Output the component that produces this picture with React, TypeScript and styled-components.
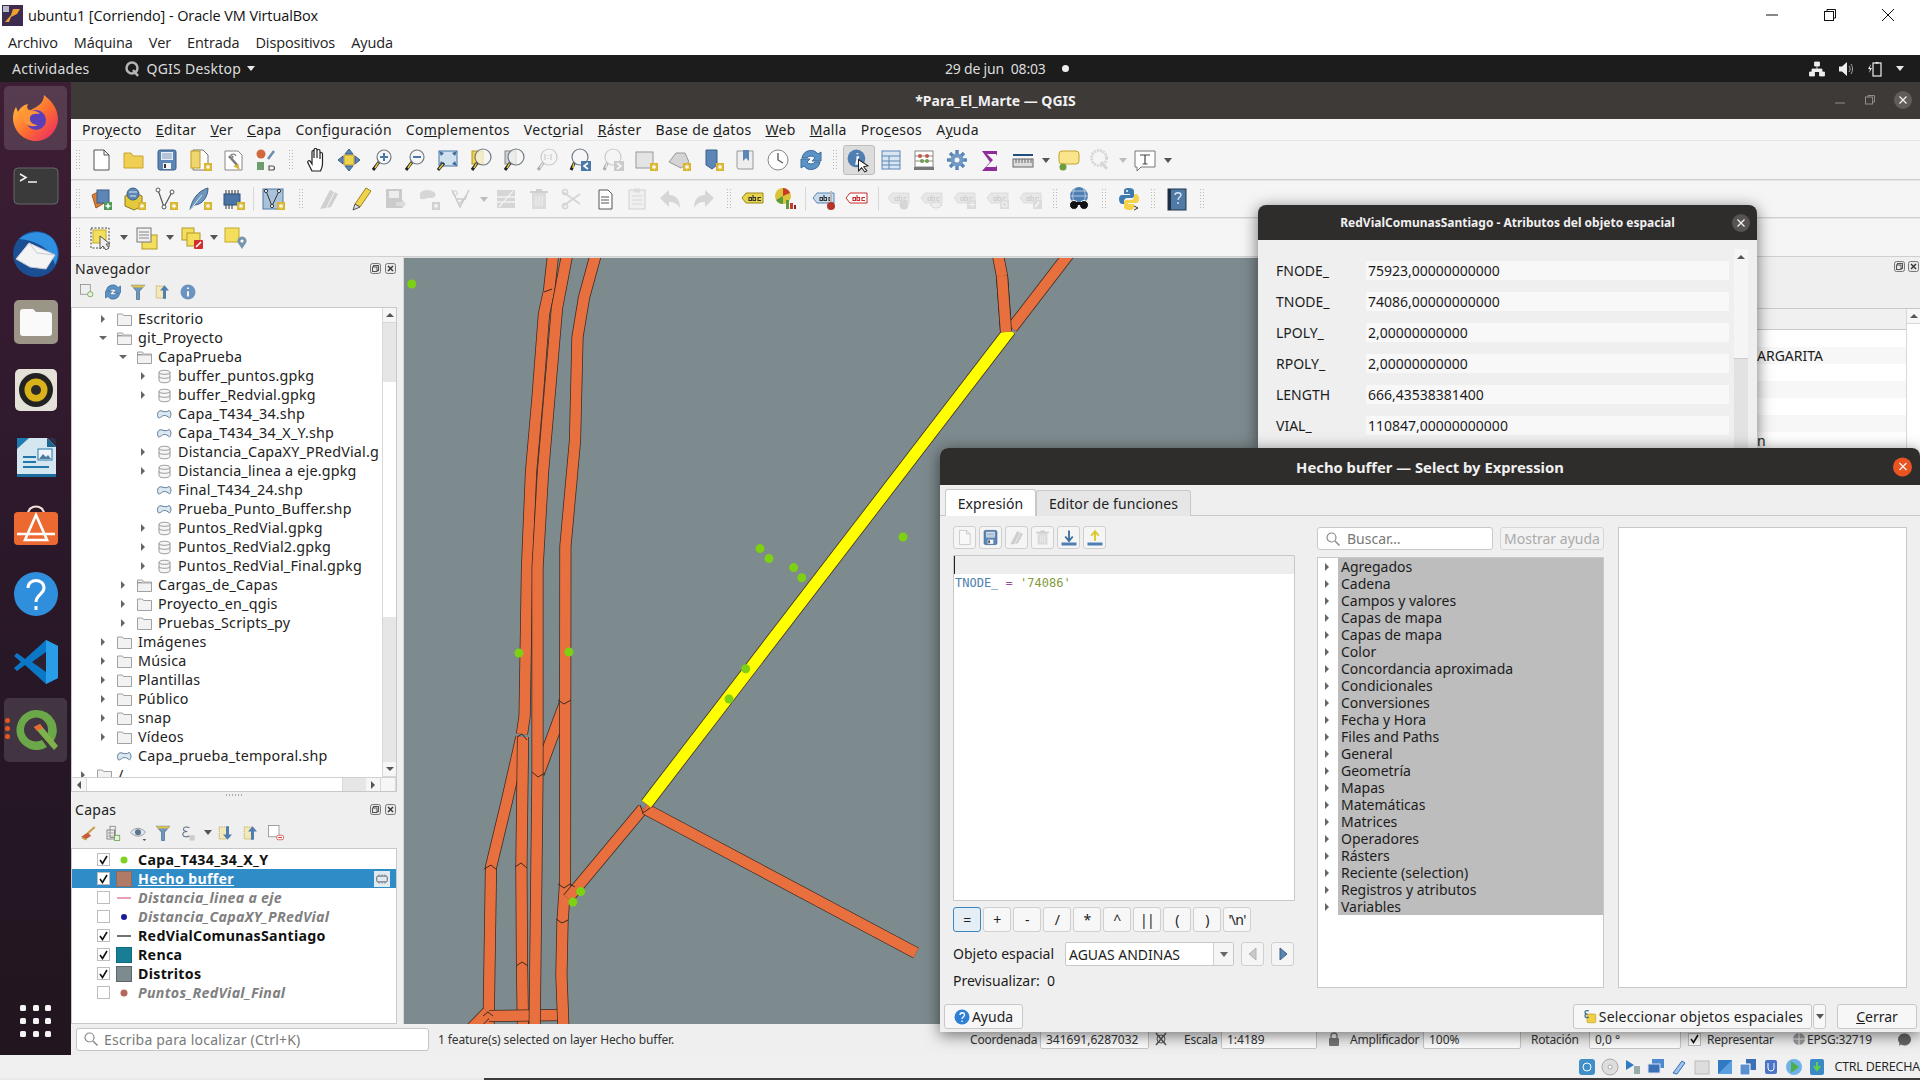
import React from "react";
import styled, { createGlobalStyle } from "styled-components";

const Global = createGlobalStyle`
  html, body { margin: 0; padding: 0; width: 1920px; height: 1080px; overflow: hidden; background: #f0f0f0; }
  #root { width: 1920px; height: 1080px; }
  * { box-sizing: border-box; }
`;

const GUEST = `"Noto Sans", "Open Sans", sans-serif`;

const Screen = styled.div`position: relative; width: 1920px; height: 1080px; display: flex; flex-direction: column; overflow: hidden; font-family: ${GUEST}; color: #1c1c1c;`;
const HostTitle = styled.div`height: 30px; background: #fff; display: flex; align-items: center; padding-left: 2px; font-size: 14.5px; gap: 5px; color: #111; font-family: "Open Sans", sans-serif; letter-spacing: -0.1px;`;
const HostControls = styled.div`margin-left: auto; display: flex; align-items: center; justify-content: flex-end; gap: 46px; padding-right: 26px;`;
const HostMenu = styled.div`height: 25px; background: #fff; display: flex; align-items: center; gap: 16px; padding-left: 8px; font-size: 14.5px; color: #222; font-family: "Open Sans", sans-serif; letter-spacing: -0.1px; padding-bottom: 1px;`;
const Guest = styled.div`height: 1000px; display: flex; flex-direction: column;`;
const TopBar = styled.div`height: 27px; background: #1c1c1c; color: #dcdcdc; font-size: 14px; letter-spacing: .25px; display: flex; align-items: center; position: relative; padding-left: 12px;`;
const TopApp = styled.div`display: flex; align-items: center; gap: 6px; margin-left: 35px;`;
const Caret = styled.span<{ $c?: string }>`display: inline-block; width: 0; height: 0; border-left: 4px solid transparent; border-right: 4px solid transparent; border-top: 5px solid ${(p) => p.$c || "#e8e8e8"};`;
const Clock = styled.div`position: absolute; left: 945px; top: 0; height: 27px; display: flex; align-items: center; gap: 16px; letter-spacing: -0.2px;`;
const Dot = styled.span`width: 7px; height: 7px; border-radius: 50%; background: #eee;`;
const Tray = styled.div`margin-left: auto; display: flex; align-items: center; gap: 13px; padding-right: 16px;`;
const GuestRow = styled.div`flex: 1; display: flex; min-height: 0;`;
const Sidebar = styled.div`width: 71px; padding: 4px 4px 0; display: flex; flex-direction: column; gap: 4px; background: linear-gradient(180deg, #3e1e35 0%, #2a1829 50%, #21151f 100%);`;
const SideItem = styled.div<{ $on?: boolean }>`position: relative; height: 64px; flex: none; border-radius: 5px; display: flex; align-items: center; justify-content: center; background: ${(p) => (p.$on ? "rgba(255,255,255,.13)" : "transparent")};`;
const Pips = styled.div`position: absolute; left: 1px; top: 20px; display: flex; flex-direction: column; gap: 3px;`;
const Pip = styled.span`width: 5px; height: 5px; border-radius: 50%; background: #e95420;`;
const AppsGrid = styled.div`margin-top: auto; margin-bottom: 18px; align-self: center; display: grid; grid-template-columns: repeat(3, 6px); gap: 7px 6.5px;`;
const AppsDot = styled.span`width: 6px; height: 6px; border-radius: 1.5px; background: #f4f4f4;`;

const Qgis = styled.div`flex: 1; min-width: 0; display: flex; flex-direction: column;`;
const WinTitle = styled.div`position: relative; height: 37px; flex: none; background: #3d3a38; color: #f0f0f0; font-weight: 700; font-size: 14px; display: flex; align-items: center; justify-content: center;`;
const WinBtns = styled.div`position: absolute; right: 8px; top: 9px; display: flex; align-items: center; gap: 19px;`;
const CloseDisc = styled.span<{ $c?: string; $s?: number }>`width: ${(p) => p.$s || 18}px; height: ${(p) => p.$s || 18}px; border-radius: 50%; background: ${(p) => p.$c || "#5f5c5a"}; display: flex; align-items: center; justify-content: center; flex: none;`;
const MenuBar = styled.div`height: 21px; flex: none; background: #f6f6f6; display: flex; align-items: center; gap: 14px; padding-left: 11px; font-size: 14px; letter-spacing: .3px; color: #1e1e1e; white-space: nowrap;`;
const ToolRow = styled.div<{ $h: number }>`height: ${(p) => p.$h}px; flex: none; background: #f5f5f5; border-top: 1px solid #e6e6e6; border-bottom: 1px solid #cfcfcf; display: flex; align-items: center;`;
const ToolBtn = styled.div<{ $w?: number; $off?: boolean; $on?: boolean }>`width: ${(p) => p.$w || 33}px; height: 30px; flex: none; display: flex; align-items: center; justify-content: center; opacity: ${(p) => (p.$off ? 0.33 : 1)}; filter: ${(p) => (p.$off ? "grayscale(1)" : "none")}; border-radius: 3px; ${(p) => (p.$on ? "background:#dcdcdc;border:1px solid #bdbdbd;" : "")}`;
const Grip = styled.div<{ $w: number }>`width: ${(p) => p.$w}px; flex: none; height: 22px; display: flex; justify-content: center; &::before { content: ""; width: 6px; height: 100%; background-image: radial-gradient(#b8b8b8 0.8px, transparent 1px); background-size: 3px 3px; }`;
const Sep = styled.div<{ $w: number }>`width: ${(p) => p.$w}px; flex: none; height: 24px; display: flex; justify-content: center; &::before { content: ""; width: 1px; height: 100%; background: #d8d8d8; }`;
const DropSlot = styled.div<{ $w: number; $off?: boolean }>`width: ${(p) => p.$w}px; flex: none; display: flex; justify-content: center; opacity: ${(p) => (p.$off ? 0.35 : 1)};`;

const Content = styled.div`flex: 1; min-height: 0; display: flex;`;
const LeftDock = styled.div`width: 332px; flex: none; background: #efefef; display: flex; flex-direction: column;`;
const DockHead = styled.div`height: 22px; flex: none; display: flex; align-items: center; justify-content: space-between; padding: 0 7px 0 4px; font-size: 14px; letter-spacing: .3px; color: #222;`;
const DockBtns = styled.div`display: flex; gap: 4px;`;
const DockTools = styled.div`height: 25px; flex: none; display: flex; align-items: center; padding-left: 4px;`;
const DockTool = styled.div<{ $w?: number }>`width: ${(p) => p.$w || 25}px; flex: none; display: flex; align-items: center; justify-content: center;`;
const TreeFrame = styled.div<{ $h: number; $mt: number }>`position: relative; height: ${(p) => p.$h}px; margin: ${(p) => p.$mt}px 6px 0 0; background: #fff; border: 1px solid #c8c8c8; flex: none; display: flex; flex-direction: column;`;
const TreeMain = styled.div`flex: 1; min-height: 0; display: flex;`;
const TreeList = styled.div`flex: 1; min-width: 0; overflow: hidden; padding-top: 1px;`;
const TreeRow = styled.div<{ $d: number }>`height: 19px; display: flex; align-items: center; padding-left: ${(p) => 28 + 20 * p.$d}px; font-size: 14.3px; letter-spacing: .2px; white-space: nowrap; color: #222;`;
const ArrowSlot = styled.span<{ $k: string }>`width: 6px; margin-right: 11px; flex: none; display: flex; justify-content: center;
  &::before { content: ""; display: ${(p) => (p.$k === "n" ? "none" : "block")}; width: 0; height: 0;
    ${(p) => p.$k === "r" ? "border-top:4px solid transparent;border-bottom:4px solid transparent;border-left:4px solid #666;" : "border-left:4px solid transparent;border-right:4px solid transparent;border-top:4px solid #666;"} }`;
const NodeIcon = styled.span`width: 15px; height: 14px; margin-right: 6px; flex: none; display: flex;`;
const VBar = styled.div`width: 14px; flex: none; display: flex; flex-direction: column; border-left: 1px solid #d8d8d8;`;
const BarArrow = styled.div`height: 15px; flex: none; background: #f6f6f6; display: flex; align-items: center; justify-content: center; border-bottom: 1px solid #d8d8d8;`;
const BarTrack = styled.div<{ $h?: number; $fill?: boolean }>`${(p) => (p.$h ? `height:${p.$h}px;flex:none;` : "flex:1;")} background: ${(p) => (p.$fill ? "#fff" : "#e6e6e6")};`;
const HBar = styled.div`height: 14px; flex: none; display: flex; border-top: 1px solid #d0d0d0; background: #f6f6f6;`;
const HArrow = styled.div`width: 15px; flex: none; display: flex; align-items: center; justify-content: center; border-right: 1px solid #d8d8d8;`;
const HThumb = styled.div`flex: 1; background: #fff; border-right: 1px solid #d8d8d8;`;
const HTrack = styled.div`width: 23px; flex: none; background: #e6e6e6;`;
const TriUp = styled.span`width: 0; height: 0; border-left: 4px solid transparent; border-right: 4px solid transparent; border-bottom: 4px solid #555;`;
const TriDown = styled.span`width: 0; height: 0; border-left: 4px solid transparent; border-right: 4px solid transparent; border-top: 4px solid #555;`;
const TriLeft = styled.span`width: 0; height: 0; border-top: 4px solid transparent; border-bottom: 4px solid transparent; border-right: 4px solid #555;`;
const TriRight = styled.span`width: 0; height: 0; border-top: 4px solid transparent; border-bottom: 4px solid transparent; border-left: 4px solid #555;`;
const Splitter = styled.div`height: 6px; flex: none; display: flex; justify-content: center; align-items: center; padding-right: 7px; &::before { content: ""; width: 18px; height: 2px; background-image: radial-gradient(#aaa 0.8px, transparent 1px); background-size: 3px 2px; }`;
const LayerRow = styled.div<{ $sel?: boolean }>`height: 19px; display: flex; align-items: center; padding-left: 25px; position: relative; background: ${(p) => (p.$sel ? "#308cc6" : "transparent")};`;
const Check = styled.span`width: 13px; height: 13px; margin-right: 6px; border: 1px solid #bdbdbd; background: #fff; flex: none; display: flex; align-items: center; justify-content: center;`;
const Swatch = styled.span`width: 16px; height: 16px; margin-right: 6px; flex: none; display: flex; align-items: center; justify-content: center;`;
const LayerName = styled.span<{ $off?: boolean; $sel?: boolean }>`font-size: 14.2px; letter-spacing: .3px; font-weight: 700; white-space: nowrap; font-style: ${(p) => (p.$off ? "italic" : "normal")}; color: ${(p) => (p.$sel ? "#fff" : p.$off ? "#808080" : "#111")}; ${(p) => (p.$sel ? "text-decoration: underline;" : "")}`;
const LayerBadge = styled.span`position: absolute; right: 6px; top: 2px; width: 16px; height: 16px; background: #dfeaf3; display: flex; align-items: center; justify-content: center;`;

const MapArea = styled.div`width: 1337px; flex: none; background: #7d8a8e; border-top: 1px solid #ddd; border-left: 1px solid #d8d8d8;`;
const MapSvg = styled.svg`display: block; width: 1336px; height: 767px;`;
const RightDock = styled.div`flex: 1; background: #efefef; display: flex; flex-direction: column;`;
const RightHead = styled.div`height: 51px; flex: none; display: flex; justify-content: flex-end; padding: 4px 1px 0 0; gap: 3px;`;
const TableWrap = styled.div`flex: 1; background: #fff; display: flex; min-height: 0; border-top: 1px solid #c8c8c8;`;
const TableMain = styled.div`flex: 1; min-width: 0;`;
const TableHead = styled.div`height: 21px; background: #f0f0f0; border-bottom: 1px solid #c8c8c8;`;
const TableCell = styled.div<{ $alt: boolean }>`height: 17px; background: ${(p) => (p.$alt ? "#f7f7f7" : "#fff")}; font-size: 14px; line-height: 17px; padding-left: 17px; white-space: nowrap;`;

const StatusBar = styled.div`height: 31px; flex: none; background: #efefef; display: flex; align-items: center; font-size: 12px; color: #333; padding-bottom: 1px;`;
const Locator = styled.div`width: 353px; height: 23px; margin-left: 5px; flex: none; border: 1px solid #c6c6c6; border-radius: 3px; background: #fff; display: flex; align-items: center; padding-left: 7px; gap: 6px; font-size: 14px; letter-spacing: .2px; color: #7a7a7a;`;
const Message = styled.div`margin-left: 9px; width: 532px; flex: none; white-space: nowrap; letter-spacing: -.1px;`;
const StatusField = styled.div<{ $w: number }>`width: ${(p) => p.$w}px; height: 20px; flex: none; background: #fff; border: 1px solid #c6c6c6; border-radius: 2px; padding-left: 5px; display: flex; align-items: center; white-space: nowrap;`;
const StatusText = styled.span<{ $w: number }>`width: ${(p) => p.$w}px; flex: none; white-space: nowrap; letter-spacing: -0.2px;`;
const StatusGap = styled.span<{ $w: number }>`width: ${(p) => p.$w}px; flex: none; display: flex; align-items: center; justify-content: center;`;

const HostStatus = styled.div`height: 23px; flex: none; background: #f0f0f0; display: flex; align-items: center; justify-content: flex-end; gap: 5px; font-size: 12.5px; color: #222; white-space: nowrap; font-family: "Open Sans", sans-serif; letter-spacing: -0.2px;`;
const BottomLine = styled.div`height: 2px; flex: none; background: linear-gradient(90deg, #e8e8e8 0 484px, #3b3b3b 484px);`;

/* floating windows */
const Floating = styled.div<{ $x: number; $y: number; $w: number; $h: number; $z: number }>`position: absolute; left: ${(p) => p.$x}px; top: ${(p) => p.$y}px; width: ${(p) => p.$w}px; height: ${(p) => p.$h}px; z-index: ${(p) => p.$z}; background: #efefef; border-radius: 8px 8px 0 0; box-shadow: 0 3px 16px rgba(0,0,0,.55); display: flex; flex-direction: column; overflow: hidden;`;
const FloatTitle = styled.div<{ $h: number; $fs: number }>`position: relative; height: ${(p) => p.$h}px; flex: none; background: #2f2d2c; color: #f0f0f0; font-weight: 700; font-size: ${(p) => p.$fs}px; display: flex; align-items: center; justify-content: center;`;
const FloatClose = styled.div<{ $r: number }>`position: absolute; right: ${(p) => p.$r}px; top: 50%; transform: translateY(-50%);`;
const AttrBody = styled.div`flex: 1; display: flex; padding: 9px 9px 0 18px; min-height: 0;`;
const AttrGrid = styled.div`width: 453px; flex: none; padding-top: 12px; display: flex; flex-direction: column; gap: 12px;`;
const AttrRow = styled.div`display: flex; height: 19px; align-items: center; font-size: 14px;`;
const AttrLabel = styled.span`width: 90px; flex: none;`;
const AttrValue = styled.span`flex: 1; height: 19px; background: #f8f8f8; padding-left: 2px; line-height: 19px;`;
const AttrBar = styled.div`width: 14px; margin-left: 5px; display: flex; flex-direction: column;`;
const AttrBarUp = styled.div`height: 16px; flex: none; background: #f5f5f5; display: flex; justify-content: center; align-items: center;`;
const AttrThumb = styled.div`height: 94px; flex: none; background: #f5f5f5; border-bottom: 1px solid #ccc;`;
const AttrTrack = styled.div`flex: 1; background: #e2e2e2;`;

const TabsRow = styled.div`height: 31px; flex: none; display: flex; align-items: flex-end; padding-left: 5px; border-bottom: 1px solid #c8c8c8;`;
const Tab = styled.div<{ $on?: boolean }>`height: ${(p) => (p.$on ? 27 : 26)}px; width: ${(p) => (p.$on ? 91 : 155)}px; flex: none; background: ${(p) => (p.$on ? "#fff" : "#e6e6e6")}; border: 1px solid #c8c8c8; border-bottom: none; border-radius: 3px 3px 0 0; display: flex; align-items: center; justify-content: center; font-size: 14px; letter-spacing: .1px; margin-bottom: -1px; color: #222;`;
const DlgMain = styled.div`height: 472px; flex: none; padding: 10px 13px 0; display: flex;`;
const LeftCol = styled.div`width: 342px; flex: none; display: flex; flex-direction: column;`;
const SmallBtnRow = styled.div`display: flex; gap: 3px; height: 23px; flex: none;`;
const SmallBtn = styled.div<{ $off?: boolean }>`width: 23px; height: 23px; border: 1px solid #cfcfcf; border-radius: 3px; background: #f5f5f5; display: flex; align-items: center; justify-content: center; & > svg { opacity: ${(p) => (p.$off ? 0.35 : 1)}; filter: ${(p) => (p.$off ? "grayscale(1)" : "none")}; }`;
const Editor = styled.div`height: 346px; flex: none; margin-top: 6px; background: #fff; border: 1px solid #c8c8c8; border-radius: 1px; font-family: "DejaVu Sans Mono", monospace; font-size: 12px;`;
const EdLine = styled.div<{ $cur?: boolean }>`height: 18px; line-height: 18px; padding-left: 1px; white-space: pre; background: ${(p) => (p.$cur ? "#ededed" : "#fff")}; ${(p) => (p.$cur ? "border-left: 1px solid #222;" : "")}`;
const Tk = styled.span<{ $c: string }>`color: ${(p) => p.$c};`;
const OpRow = styled.div`display: flex; gap: 2px; margin-top: 6px; height: 25px; flex: none;`;
const OpBtn = styled.div<{ $on?: boolean }>`width: 28px; height: 25px; border: 1px solid ${(p) => (p.$on ? "#3a86c0" : "#cfcfcf")}; background: ${(p) => (p.$on ? "#e6eef5" : "#f7f7f7")}; border-radius: 3px; font-size: 14px; letter-spacing: -.7px; display: flex; align-items: center; justify-content: center; color: #222;`;
const FeatRow = styled.div`display: flex; align-items: center; height: 24px; margin-top: 10px; flex: none; font-size: 14px;`;
const FeatLabel = styled.span`width: 112px; flex: none; white-space: nowrap; padding-bottom: 2px;`;
const Combo = styled.div`width: 169px; height: 24px; flex: none; background: #fff; border: 1px solid #c8c8c8; border-radius: 2px; display: flex; align-items: center; padding-left: 3px; font-size: 14px; justify-content: space-between; white-space: nowrap;`;
const ComboArrow = styled.span`width: 20px; height: 22px; flex: none; border-left: 1px solid #d0d0d0; background: #f5f5f5; display: flex; align-items: center; justify-content: center;`;
const NavBtn = styled.div<{ $off?: boolean }>`width: 23px; height: 24px; margin-left: 7px; flex: none; border: 1px solid #cfcfcf; border-radius: 3px; background: #f5f5f5; display: flex; align-items: center; justify-content: center;`;
const Preview = styled.div`height: 22px; line-height: 22px; margin-top: 4px; font-size: 14px; white-space: pre;`;
const MidCol = styled.div`width: 287px; margin-left: 22px; flex: none; display: flex; flex-direction: column; padding-top: 1px;`;
const SearchRow = styled.div`display: flex; gap: 7px; height: 23px; flex: none;`;
const SearchBox = styled.div`width: 176px; height: 23px; flex: none; background: #fff; border: 1px solid #c8c8c8; border-radius: 3px; display: flex; align-items: center; gap: 7px; padding-left: 8px; font-size: 14px; color: #777; white-space: nowrap;`;
const HelpBtn = styled.div`flex: 1; height: 23px; background: #f2f2f2; border: 1px solid #d6d6d6; border-radius: 3px; font-size: 14px; color: #aaa; display: flex; align-items: center; justify-content: center; white-space: nowrap;`;
const GroupList = styled.div`flex: 1; margin-top: 7px; background: #fff; border: 1px solid #c8c8c8; min-height: 0;`;
const GroupRow = styled.div`height: 17px; display: flex; align-items: center; background: linear-gradient(90deg, #fff 0 20px, #bdbdbd 20px); font-size: 14px; white-space: nowrap; color: #1c1c1c;`;
const GroupArrow = styled.span`width: 20px; flex: none; display: flex; justify-content: center; padding-right: 3px; &::before { content: ""; width: 0; height: 0; border-top: 4px solid transparent; border-bottom: 4px solid transparent; border-left: 4px solid #666; }`;
const GroupText = styled.span`padding-left: 3px;`;
const HelpPane = styled.div`width: 289px; margin-left: 14px; margin-top: 1px; height: 461px; flex: none; background: #fff; border: 1px solid #c8c8c8;`;
const DlgFoot = styled.div`flex: none; margin-top: 16px; height: 25px; display: flex; align-items: center; padding: 0 3px 0 4px; font-size: 14px;`;
const FootBtn = styled.div<{ $w: number; $ml?: number; $ls?: number }>`width: ${(p) => p.$w}px; margin-left: ${(p) => (p.$ml === undefined ? 0 : p.$ml)}px; height: 25px; flex: none; background: #f7f7f7; border: 1px solid #c8c8c8; border-radius: 3px; display: flex; align-items: center; justify-content: center; gap: 2px; white-space: nowrap; letter-spacing: ${(p) => p.$ls || 0}px;`;

/* ------------- icons ------------- */
const Svg: React.FC<{ s?: number; vb?: string; children: React.ReactNode }> = ({ s = 24, vb = "0 0 24 24", children }) => (
  <svg width={s} height={s} viewBox={vb} fill="none">{children}</svg>
);
const Star = ({ x = 16, y = 15, c = "#d9b52c" }: { x?: number; y?: number; c?: string }) => (
  <g>
    <rect x={x} y={y} width="8" height="8" fill={c} />
    <path d={`M${x + 4} ${y + 1.5}v5M${x + 1.8} ${y + 2.8}l4.4 2.4M${x + 6.2} ${y + 2.8}l-4.4 2.4`} stroke="#fff" strokeWidth="1" />
  </g>
);
const Lens = ({ cx = 14, cy = 9, r = 7, fill = "#f6f6f6" }: { cx?: number; cy?: number; r?: number; fill?: string }) => (
  <g>
    <path d={`M${cx - r * 0.7} ${cy + r * 0.7}L3 22`} stroke="#222" strokeWidth="3" />
    <path d={`M${cx - r * 0.8} ${cy + r * 0.8}L5 20`} stroke="#e9c84a" strokeWidth="1.5" />
    <circle cx={cx} cy={cy} r={r} fill={fill} stroke="#6f7b86" strokeWidth="1.2" />
  </g>
);
const AbcTag = ({ c = "#e8d34c", t = "#333", s = "#9a8a1a" }: { c?: string; t?: string; s?: string }) => (
  <g>
    <path d="M1 11l4-5h17v10H5z" fill={c} stroke={s} />
    <path d="M8 13.5v-3h2.5v3zM12 8v5.5h2.5v-3H12M20 10.5h-3v3h3" stroke={t} strokeWidth="1.1" />
  </g>
);

const ICONS: Record<string, React.ReactNode> = {
  newdoc: <path d="M5 2h10l5 5v15H5z M15 2v5h5" fill="#fff" stroke="#555" />,
  open: <path d="M2 20V5h7l2 3h10v12z" fill="#f0cf55" stroke="#c9a42d" />,
  save: <g><rect x="3" y="2" width="18" height="20" rx="2" fill="#5b86b5" stroke="#3c5f86" /><rect x="6" y="4" width="12" height="8" fill="#e8eef4" /><path d="M7 6h10M7 8h10M7 10h10" stroke="#7f9cba" /><rect x="8" y="15" width="8" height="6" fill="#f4f4f4" /><rect x="9" y="16" width="2" height="4" fill="#333" /></g>,
  saveas: <g><path d="M5 2h10l5 5v15H5z" fill="#fff" stroke="#777" /><rect x="3" y="3" width="9" height="17" fill="#f0d66e" stroke="#c29d1f" /><Star /></g>,
  props: <g><path d="M4 3h13l4 4v15H4z" fill="#fff" stroke="#888" /><path d="M8 8l9 10" stroke="#777" strokeWidth="2.5" /><path d="M15 8a3 3 0 0 0-5-1l2 2-2 2" stroke="#888" strokeWidth="1.3" /><path d="M12 18l7 4-2-6z" fill="#d4b33c" /></g>,
  style: <g><circle cx="7" cy="6" r="4.5" fill="#d2683c" /><path d="M14 11l6-8" stroke="#6b8cae" strokeWidth="2.5" /><rect x="3" y="14" width="7" height="8" fill="#6d9c6d" /><path d="M15 22v-4h3.5a2 2 0 0 1 0 4zM18.5 15" stroke="#555" strokeWidth="1.2" /></g>,
  hand: <path d="M8 23l-4-8c-1-2 1-3 2-2l2 3V4c0-2 2-2 2 0v6-8c0-2 3-2 3 0v8-7c0-2 3-2 3 0v8-5c0-2 2.5-2 2.5 0v10c0 3-1 5-2 7z" fill="#fff" stroke="#222" strokeWidth="1.2" />,
  pan: <g><rect x="7" y="7" width="10" height="10" fill="#f0d34c" stroke="#b8982a" /><path d="M12 1l4 5H8zM12 23l4-5H8zM1 12l5-4v8zM23 12l-5-4v8z" fill="#5b86b5" stroke="#3c5f86" /></g>,
  zoomin: <g><Lens /><path d="M14 5v8M10 9h8" stroke="#4a78a8" strokeWidth="2" /></g>,
  zoomout: <g><Lens /><path d="M10 9h8" stroke="#4a78a8" strokeWidth="2" /></g>,
  full: <g><rect x="3" y="3" width="18" height="15" fill="#cfe0ee" stroke="#4a78a8" /><path d="M3 3l5 2-3 3zM21 3l-5 2 3 3zM21 18l-5-2 3-3zM3 18l5-2-3-3z" fill="#3d6c9b" /><path d="M8 15L2 22" stroke="#222" strokeWidth="3" /><path d="M7 16l-4 5" stroke="#e9c84a" strokeWidth="1.5" /></g>,
  zlayer: <g><rect x="3" y="3" width="11" height="13" fill="#f0d34c" stroke="#b8982a" /><Lens cx={14} cy={9} r={8} fill="rgba(245,245,240,.75)" /></g>,
  zsel: <g><rect x="3" y="3" width="11" height="13" fill="#cfd3d6" stroke="#888" /><Lens cx={14} cy={9} r={8} fill="rgba(245,245,240,.75)" /></g>,
  z11: <g><Lens cx={14} cy={9} r={8} /><path d="M10 6v6M13 7v1M13 10v1M16 6v6" stroke="#777" strokeWidth="1.2" /></g>,
  zlast: <g><Lens cx={12} cy={9} r={8} /><rect x="13" y="13" width="10" height="10" fill="#4a78a8" /><path d="M20 15l-4 3 4 3" stroke="#fff" strokeWidth="1.6" /></g>,
  znext: <g><Lens cx={12} cy={9} r={8} /><rect x="13" y="13" width="10" height="10" fill="#777" /><path d="M16 15l4 3-4 3" stroke="#fff" strokeWidth="1.6" /></g>,
  map: <g><rect x="2" y="4" width="17" height="16" fill="#e4e4e4" stroke="#999" /><Star /></g>,
  map3d: <g><path d="M2 14l7-9h9l4 9-8 6z" fill="#d4d4d4" stroke="#999" /><Star /></g>,
  bm: <g><path d="M6 2h11v15l-5 4-6-4z" fill="#5b86b5" stroke="#3c5f86" /><Star /></g>,
  bms: <g><path d="M4 3h16v18H6a2 2 0 0 1-2-2z" fill="#eee" stroke="#999" /><path d="M10 2h6v11l-3-3-3 3z" fill="#5b86b5" /></g>,
  clock: <g><circle cx="12" cy="12" r="10" fill="#fff" stroke="#888" /><path d="M12 5v7l5 3" stroke="#555" strokeWidth="1.3" /></g>,
  refresh: <g><path d="M3 10a9 9 0 0 1 16-4l3-2v9h-9l3-3a5 5 0 0 0-8 0z" fill="#5b93c7" stroke="#3c6c9b" /><path d="M21 14a9 9 0 0 1-16 4l-3 2v-9h9l-3 3a5 5 0 0 0 8 0z" fill="#5b93c7" stroke="#3c6c9b" /></g>,
  identify: <g><circle cx="10" cy="10" r="8.5" fill="#4f7fb2" /><path d="M11 5v1M10 9h1.5l-1.5 6h2" stroke="#fff" strokeWidth="2" /><path d="M12 11l0 11 3-3 3 4 2-1-3-4 4-1z" fill="#fff" stroke="#222" /></g>,
  table: <g><rect x="3" y="3" width="18" height="18" fill="#d9e6f2" stroke="#5b86b5" /><path d="M3 8h18M3 13h18M3 17h18M10 8v13" stroke="#5b86b5" /></g>,
  stats: <g><rect x="3" y="3" width="18" height="16" fill="#fff" stroke="#888" /><path d="M3 8h18M3 13h18" stroke="#888" /><circle cx="8" cy="8" r="2" fill="#c9544a" /><circle cx="15" cy="8" r="2" fill="#c9544a" /><circle cx="10" cy="13" r="2" fill="#6c9c4c" /><circle cx="15" cy="13" r="2" fill="#6c9c4c" /><rect x="2" y="19" width="20" height="3" fill="#777" /></g>,
  gear: <g><path d="M12 2v20M2 12h20M5 5l14 14M19 5L5 19" stroke="#5b86b5" strokeWidth="3.4" /><circle cx="12" cy="12" r="6.5" fill="#6f9ac4" /><circle cx="12" cy="12" r="2.5" fill="#f5f5f5" /></g>,
  sigma: <path d="M4 3h15v5l-1-2H9l6 6-7 7h10l1-2v6H4l8-9z" fill="#8e2d99" />,
  ruler: <g><path d="M2 7h20" stroke="#1f4f7a" strokeWidth="2" /><rect x="2" y="11" width="20" height="8" fill="#ddd" stroke="#666" /><path d="M5 11v4M8 11v4M11 11v4M14 11v4M17 11v4M20 11v4" stroke="#666" /></g>,
  tip: <g><rect x="3" y="3" width="20" height="13" rx="3" fill="#fbe58a" stroke="#c2a52d" /><circle cx="7" cy="19" r="3.5" fill="#6e9e3c" /></g>,
  q: <g><circle cx="12" cy="10" r="7.5" stroke="#999" strokeWidth="3" strokeDasharray="2 1" /><path d="M14 14l6 7" stroke="#999" strokeWidth="3" /></g>,
  T: <g><path d="M2 3h20v16H8l-4 4v-4H2z" fill="#fff" stroke="#777" /><path d="M7 7h10M12 7v9M9.5 16h5" stroke="#444" strokeWidth="1.2" /></g>,
  dsm: <g><path d="M3 8l10-5 4 12-10 6z" fill="#d4813c" stroke="#a35a1e" /><rect x="8" y="3" width="12" height="13" fill="#5b86b5" stroke="#3c5f86" /><rect x="15" y="15" width="8" height="8" fill="#4e9a5a" /><path d="M19 16.5v5M16.5 19h5" stroke="#fff" strokeWidth="1.6" /></g>,
  gpkg: <g><path d="M3 9l8-4 9 4v10l-8 4-9-4z" fill="#e5c93c" stroke="#8a7a1c" /><circle cx="11" cy="7" r="6" fill="#5b86b5" stroke="#3c5f86" /><path d="M7 5h8M8 9h6" stroke="#e0e8ef" /><Star /></g>,
  vline: <g><path d="M3 3l6 17 8-15" stroke="#555" strokeWidth="1.2" /><circle cx="3" cy="3" r="2" fill="#fff" stroke="#555" /><circle cx="9" cy="20" r="2" fill="#fff" stroke="#555" /><circle cx="17" cy="5" r="2" fill="#fff" stroke="#555" /><Star x={15} y={15} /></g>,
  feather: <g><path d="M2 23C4 12 10 4 20 1c0 8-5 17-14 17z" fill="#6f97bd" stroke="#3c5f86" /><path d="M2 23L14 8" stroke="#dce7f0" /><Star /></g>,
  chip: <g><rect x="3" y="7" width="16" height="11" fill="#4b74a6" stroke="#2e4f78" /><path d="M5 3v4M8 3v4M11 3v4M14 3v4M17 3v4M5 18v4M8 18v4M11 18v4" stroke="#333" /><Star /></g>,
  vlayer: <g><rect x="2" y="2" width="20" height="20" fill="#a9c3db" stroke="#4f7aa6" /><path d="M5 4l6 15 7-15" stroke="#333" /><circle cx="5" cy="4" r="1.6" fill="#fff" stroke="#333" /><circle cx="18" cy="4" r="1.6" fill="#fff" stroke="#333" /><circle cx="11" cy="19" r="1.6" fill="#fff" stroke="#333" /><Star /></g>,
  editall: <path d="M3 22L13 3l4 2-8 16zM10 21L18 5l3 2-7 13z" fill="#888" />,
  pencil: <g><path d="M5 17L16 1l5 3-11 16z" fill="#f0d34c" stroke="#9a8420" /><path d="M5 17l-2 6 7-3z" fill="#ddd" stroke="#555" /></g>,
  editsave: <g><rect x="3" y="2" width="16" height="19" fill="#777" /><rect x="6" y="4" width="10" height="7" fill="#ddd" /><path d="M13 15h6v-3l4 5-4 5v-3h-6z" fill="#aaa" /></g>,
  addf: <g><path d="M4 6c3-4 11-4 15 0 2 4-2 5-6 5s-7 3-9 0z" fill="#999" /><Star c="#888" /></g>,
  vert: <g><path d="M3 3l8 17 9-17" stroke="#777" strokeWidth="1.5" /><circle cx="6" cy="6" r="2.3" stroke="#777" /><path d="M8 12h9M10 17l8-8" stroke="#777" strokeWidth="1.4" /></g>,
  fmulti: <g><rect x="3" y="3" width="18" height="18" fill="#999" /><path d="M3 10h18M3 15h18M5 20L19 4" stroke="#eee" strokeWidth="1.3" /></g>,
  trash: <g><rect x="5" y="6" width="14" height="16" fill="#aaa" /><path d="M3 5h18M9 3h6" stroke="#888" strokeWidth="2" /><path d="M9 9v10M12 9v10M15 9v10" stroke="#eee" /></g>,
  cut: <g><path d="M3 5l17 12M3 19L20 7" stroke="#999" strokeWidth="2" /><circle cx="5" cy="5" r="2.6" stroke="#999" strokeWidth="1.5" /><circle cx="5" cy="19" r="2.6" stroke="#999" strokeWidth="1.5" /></g>,
  copy: <g><path d="M6 3h9l4 4v15H6z" fill="#fff" stroke="#555" /><path d="M8 10h8M8 13h8M8 16h8" stroke="#555" /></g>,
  paste: <g><rect x="4" y="3" width="16" height="19" fill="#e5e5e5" stroke="#888" /><rect x="9" y="1.5" width="6" height="4" fill="#aaa" /><path d="M7 9h10M7 13h10M7 17h10" stroke="#999" /></g>,
  undo: <path d="M2 11l9-8v5c7 0 11 4 11 13-3-5-6-6-11-6v5z" fill="#999" />,
  redo: <path d="M22 11l-9-8v5C6 8 2 12 2 21c3-5 6-6 11-6v5z" fill="#999" />,
  abc: <AbcTag />,
  pie: <g><circle cx="9" cy="9" r="8" fill="#d9c43a" /><path d="M9 9V1a8 8 0 0 1 7 5z" fill="#c93a2a" /><path d="M9 9l-7 4a8 8 0 0 0 7 4z" fill="#5d9c3c" /><rect x="12" y="13" width="3" height="9" fill="#5d9c3c" /><rect x="16" y="16" width="3" height="6" fill="#c93a2a" /><rect x="20" y="18" width="2" height="4" fill="#7d2a1e" /></g>,
  abtemp: <g><AbcTag c="#c9dcee" s="#5b86b5" /><rect x="18" y="4" width="2" height="12" fill="#bbb" /><circle cx="19" cy="19" r="4" fill="#b3342a" /></g>,
  abcr: <AbcTag c="#fff" t="#c62c2c" s="#c62c2c" />,
  abg1: <g><AbcTag c="#ccc" s="#aaa" t="#888" /><circle cx="17" cy="18" r="4.5" fill="#999" /></g>,
  abg2: <g><AbcTag c="#ccc" s="#aaa" t="#888" /><path d="M10 18c4-4 8-4 12 0-4 4-8 4-12 0z" fill="#ddd" stroke="#999" /></g>,
  abg3: <g><AbcTag c="#ccc" s="#aaa" t="#888" /><rect x="14" y="13" width="9" height="9" fill="#aaa" /><path d="M16 17.5h4M18.5 15l2.5 2.5-2.5 2.5" stroke="#fff" /></g>,
  abg4: <g><AbcTag c="#ccc" s="#aaa" t="#888" /><rect x="14" y="13" width="9" height="9" fill="#aaa" /><circle cx="18.5" cy="17.5" r="2.5" stroke="#fff" /></g>,
  abg5: <g><AbcTag c="#ccc" s="#aaa" t="#888" /><rect x="14" y="13" width="9" height="9" fill="#aaa" /><path d="M16 20l4-5" stroke="#fff" strokeWidth="1.5" /></g>,
  binoc: <g><circle cx="12" cy="9" r="9" fill="#4f7fb2" /><path d="M5 4h14M3 9h18M8 1c-3 5-3 10 0 16M16 1c3 5 3 10 0 16" stroke="#c9d9e8" strokeWidth=".8" /><circle cx="7" cy="18" r="4.5" fill="#111" stroke="#fff" /><circle cx="17" cy="18" r="4.5" fill="#111" stroke="#fff" /><rect x="10" y="15" width="4" height="3" fill="#111" /></g>,
  py: <g><path d="M12 1c-4 0-5 1-5 3v3h6v1H5c-2 0-3 2-3 4s1 5 3 5h2v-3c0-2 2-3 3-3h5c1 0 2-1 2-2V4c0-2-2-3-5-3z" fill="#3f7cad" /><path d="M12 23c4 0 5-1 5-3v-3h-6v-1h8c2 0 3-2 3-4s-1-5-3-5h-2v3c0 2-2 3-3 3H9c-1 0-2 1-2 2v5c0 2 2 3 5 3z" fill="#f4d24a" /><circle cx="10" cy="4" r="1" fill="#fff" /><path d="M17 19l4 2-4 2" stroke="#333" /></g>,
  help: <g><rect x="3" y="2" width="18" height="21" fill="#4f7aa6" stroke="#22374f" /><rect x="3" y="2" width="3" height="21" fill="#1e2f44" /><path d="M10 8c0-3 6-3 6 0 0 2-3 2-3 5M13 15v2" stroke="#d8e5f0" strokeWidth="1.4" /></g>,
  sel: <g><rect x="2" y="2" width="18" height="20" stroke="#444" strokeDasharray="2 1.5" /><rect x="4" y="4" width="13" height="13" fill="#f4df5c" stroke="#c5a92b" /><path d="M11 10v13l3-3 3 4 3-2-3-4h4z" fill="#eee" stroke="#555" /></g>,
  seltab: <g><rect x="7" y="9" width="15" height="14" fill="#f4df5c" stroke="#b39a27" /><rect x="2" y="2" width="14" height="14" fill="#efefef" stroke="#777" /><path d="M4 6h10M4 9h10M4 12h10" stroke="#888" /></g>,
  desel: <g><rect x="2" y="2" width="12" height="12" fill="#f4df5c" stroke="#b39a27" /><rect x="7" y="7" width="13" height="13" fill="#f4df5c" stroke="#b39a27" /><rect x="14" y="14" width="9" height="9" rx="1" fill="#cf2f2f" /><path d="M16 21l5-5" stroke="#fff" strokeWidth="1.6" /></g>,
  selloc: <g><rect x="2" y="2" width="14" height="14" fill="#f4df5c" stroke="#c5a92b" /><path d="M19 23l-4-6a4.5 4.5 0 1 1 8 0z" fill="#7796ad" /><circle cx="19" cy="15" r="1.6" fill="#fff" /></g>,
};
const Ico = ({ n, s = 24 }: { n: string; s?: number }) => <Svg s={s}>{ICONS[n]}</Svg>;

type T = { k: "i" | "g" | "s" | "a"; n?: string; w?: number; off?: boolean; on?: boolean };
const i = (n: string, o?: Partial<T>): T => ({ k: "i", n, ...o });
const g = (w: number): T => ({ k: "g", w });
const s = (w: number): T => ({ k: "s", w });
const a = (w: number, off?: boolean): T => ({ k: "a", w, off });
const off = { off: true };

const ROW1: T[] = [g(13.5), i("newdoc"), i("open"), i("save"), i("saveas"), i("props"), i("style"), g(17), i("hand"), i("pan"), i("zoomin"), i("zoomout"), i("full"), i("zlayer"), i("zsel"), i("z11", off), i("zlast"), i("znext", off), i("map"), i("map3d"), i("bm"), i("bms"), i("clock"), i("refresh"), g(15), i("identify", { on: true, w: 32 }), i("table"), i("stats"), i("gear"), i("sigma"), i("ruler"), a(12), i("tip"), i("q", { w: 28, off: true }), a(20, true), i("T", { w: 24 }), a(22)];
const ROW2: T[] = [g(13.5), i("dsm"), i("gpkg"), i("vline"), i("feather"), i("chip"), s(7), i("vlayer"), g(23), i("editall", off), i("pencil"), i("editsave", off), i("addf", off), i("vert", off), a(12, true), i("fmulti", off), i("trash", off), i("cut", off), i("copy"), i("paste", { w: 30, off: true }), i("undo", { off: true, w: 36 }), i("redo", off), g(16), i("abc"), i("pie"), s(5), i("abtemp"), i("abcr"), s(9), i("abg1", off), i("abg2", off), i("abg3", off), i("abg4", off), i("abg5", off), g(15), i("binoc"), g(17), i("py"), g(15), i("help"), g(17)];
const ROW3: T[] = [g(13.5), i("sel"), a(13), i("seltab"), a(12), i("desel"), a(10), i("selloc")];

const ToolItems = ({ items }: { items: T[] }) => (
  <>
    {items.map((t, idx) =>
      t.k === "g" ? <Grip key={idx} $w={t.w!} /> :
      t.k === "s" ? <Sep key={idx} $w={t.w!} /> :
      t.k === "a" ? <DropSlot key={idx} $w={t.w!} $off={t.off}><Caret $c="#555" /></DropSlot> :
      <ToolBtn key={idx} $w={t.w} $off={t.off} $on={t.on}><Ico n={t.n!} s={t.on ? 25 : 24} /></ToolBtn>
    )}
  </>
);

const MnemonicText = ({ t }: { t: string }) => {
  const m = t.split("&");
  return m.length === 1 ? <span>{t}</span> : <span>{m[0]}<u>{m[1][0]}</u>{m[1].slice(1)}</span>;
};
const MENU = ["Pro&yecto", "&Editar", "&Ver", "&Capa", "Con&figuración", "Co&mplementos", "Vect&orial", "&Ráster", "Base de &datos", "&Web", "&Malla", "Pro&cesos", "A&yuda"];

const FolderIco = ({ open }: { open?: boolean }) => (
  <Svg s={15} vb="0 0 15 14"><path d={open ? "M.5 13V1.5h5l1 2h8V13z M.5 4h5" : "M.5 13V1.5h5l1 1.5h8V13z"} fill="#f2f2f2" stroke="#8c8c8c" strokeWidth=".8" />{open && <path d="M.5 4.5h14" stroke="#8c8c8c" strokeWidth=".7" />}</Svg>
);
const DbIco = () => (
  <Svg s={15} vb="0 0 15 14"><path d="M2 3c0-3 11-3 11 0v8c0 3-11 3-11 0z" fill="#f6f6f6" stroke="#8c8c8c" strokeWidth=".9" /><path d="M2 3c0 2.4 11 2.4 11 0M2 7c0 2.4 11 2.4 11 0" stroke="#8c8c8c" strokeWidth=".9" /></Svg>
);
const ShpIco = () => (
  <Svg s={15} vb="0 0 15 14"><path d="M1 10C-.5 5 2 2.500 5 3.500s5 1 7-.5c2.500 1 2.500 6 .5 7.500-2-2-3.500-2.500-5.500-2.500s-4 3.500-6 2z" fill="#dbe7f1" stroke="#5e7e9c" strokeWidth="1" /></Svg>
);
type N = [number, string, string, string];
const NODES: N[] = [
  [0, "r", "f", "Escritorio"], [0, "d", "o", "git_Proyecto"], [1, "d", "o", "CapaPrueba"],
  [2, "r", "d", "buffer_puntos.gpkg"], [2, "r", "d", "buffer_Redvial.gpkg"], [2, "n", "s", "Capa_T434_34.shp"], [2, "n", "s", "Capa_T434_34_X_Y.shp"],
  [2, "r", "d", "Distancia_CapaXY_PRedVial.g"], [2, "r", "d", "Distancia_linea a eje.gpkg"], [2, "n", "s", "Final_T434_24.shp"], [2, "n", "s", "Prueba_Punto_Buffer.shp"],
  [2, "r", "d", "Puntos_RedVial.gpkg"], [2, "r", "d", "Puntos_RedVial2.gpkg"], [2, "r", "d", "Puntos_RedVial_Final.gpkg"],
  [1, "r", "o", "Cargas_de_Capas"], [1, "r", "f", "Proyecto_en_qgis"], [1, "r", "f", "Pruebas_Scripts_py"],
  [0, "r", "f", "Imágenes"], [0, "r", "f", "Música"], [0, "r", "f", "Plantillas"], [0, "r", "f", "Público"], [0, "r", "f", "snap"], [0, "r", "f", "Vídeos"], [0, "n", "s", "Capa_prueba_temporal.shp"], [-1, "r", "f", "/"],
];
const FloatIco = () => (
  <Svg s={11} vb="0 0 11 11"><rect x=".5" y=".5" width="10" height="10" rx="2" fill="#e8e8e8" stroke="#777" /><rect x="3.500" y="2.500" width="5" height="5" stroke="#555" /><rect x="2.500" y="4" width="4.500" height="4.500" fill="#e8e8e8" stroke="#555" /></Svg>
);
const CloseIco = () => (
  <Svg s={11} vb="0 0 11 11"><rect x=".5" y=".5" width="10" height="10" rx="2" fill="#e8e8e8" stroke="#777" /><path d="M3 3l5 5M8 3l-5 5" stroke="#333" strokeWidth="1.4" /></Svg>
);
const NAVT = ["addg", "refresh", "filter", "collapse", "info"];
const DOCK: Record<string, React.ReactNode> = {
  addg: <g><rect x="2" y="2" width="13" height="13" stroke="#888" /><circle cx="15" cy="15" r="3.5" fill="#eaf2e4" stroke="#5f9a3a" /></g>,
  refresh: ICONS.refresh,
  filter: <g><path d="M3 3h18l-7 8v11h-4V11z" fill="#6f97bd" stroke="#49708f" /><path d="M3 3h18l-2 3H5z" fill="#e0c24a" /></g>,
  collapse: <g><rect x="3" y="4" width="10" height="16" fill="#f4e7b8" stroke="#b8a24a" strokeDasharray="2 1" /><path d="M14 3l6 7h-4v11h-4V10H8z" fill="#4f7fb2" /></g>,
  expand: <g><rect x="3" y="4" width="10" height="16" fill="#f4e7b8" stroke="#b8a24a" strokeDasharray="2 1" /><path d="M14 21l6-7h-4V3h-4v11H8z" fill="#4f7fb2" /></g>,
  info: <g><circle cx="12" cy="12" r="10" fill="#6a94bf" /><path d="M12 6v2M12 11v7" stroke="#fff" strokeWidth="2.400" /></g>,
  brush: <g><path d="M3 17l9-6 4 5-8 5z" fill="#c95a3c" /><path d="M12 12L21 4" stroke="#c5a14a" strokeWidth="3" /><path d="M4 18l6 3" stroke="#b8a24a" strokeWidth="2" /></g>,
  addgroup: <g><rect x="4" y="8" width="10" height="12" fill="#f0f0f0" stroke="#666" /><rect x="8" y="3" width="7" height="15" stroke="#777" /><path d="M5 12h8M5 16h8" stroke="#888" /><rect x="14" y="15" width="7" height="7" fill="#e4efdc" stroke="#5f9a3a" /></g>,
  eye: <g><path d="M2 11c6-7 14-7 20 0-6 7-14 7-20 0z" fill="#dfe6ec" stroke="#888" /><circle cx="12" cy="11" r="4" fill="#59748e" /><path d="M18 20h5l-2.500 2.500z" fill="#555" /></g>,
  expr: <g><path d="M14 5c-4-2-8-1-8 2 0 2 2 3 5 3-4 0-6 1-6 4s5 4 9 2" stroke="#5b6f88" strokeWidth="1.400" /><rect x="14" y="15" width="7" height="7" fill="#ccc" /></g>,
  remove: <g><rect x="2" y="2" width="14" height="15" fill="#fff" stroke="#888" /><rect x="13" y="15" width="9" height="6" rx="2" fill="#fff" stroke="#cf4141" /><path d="M15 18h5" stroke="#cf4141" strokeWidth="1.500" /></g>,
};
const CheckMark = () => <Svg s={12} vb="0 0 11 11"><path d="M2 5.500l2.500 3.500L9 1.500" stroke="#111" strokeWidth="1.600" /></Svg>;
type L = { name: string; sym: React.ReactNode; chk?: boolean; off?: boolean; sel?: boolean };
const Dotty = ({ c, r = 3.500 }: { c: string; r?: number }) => <Svg s={16} vb="0 0 16 16"><circle cx="8" cy="8" r={r} fill={c} /></Svg>;
const Line = ({ c }: { c: string }) => <Svg s={16} vb="0 0 16 16"><path d="M1 8h14" stroke={c} strokeWidth="1.500" /></Svg>;
const Fill = ({ c, e }: { c: string; e: string }) => <Svg s={16} vb="0 0 16 16"><rect x=".5" y=".5" width="15" height="15" fill={c} stroke={e} /></Svg>;
const LAYERS: L[] = [
  { name: "Capa_T434_34_X_Y", sym: <Dotty c="#7ed321" />, chk: true },
  { name: "Hecho buffer", sym: <Fill c="#b07a68" e="#8c6a5d" />, chk: true, sel: true },
  { name: "Distancia_linea a eje", sym: <Line c="#e07fa8" />, off: true },
  { name: "Distancia_CapaXY_PRedVial", sym: <Dotty c="#1a1a9c" r={3} />, off: true },
  { name: "RedVialComunasSantiago", sym: <Line c="#444" />, chk: true },
  { name: "Renca", sym: <Fill c="#177e96" e="#0e6b82" />, chk: true },
  { name: "Distritos", sym: <Fill c="#7d8a8e" e="#5c6669" />, chk: true },
  { name: "Puntos_RedVial_Final", sym: <Dotty c="#b5675a" />, off: true },
];

/* map */
type P = [number, number][];
const pts = (p: P) => p.map((q) => q.join(",")).join(" ");
const Road = ({ p, w = 12, c = "#e8703f" }: { p: P; w?: number; c?: string }) => (
  <g fill="none" strokeLinejoin="round">
    <polyline points={pts(p)} stroke="#3a2a22" strokeWidth={w} />
    <polyline points={pts(p)} stroke={c} strokeWidth={w - 1.500} />
  </g>
);
const ROADS: P[] = [
  [[489, 1030], [488.6, 1023], [491, 867], [507, 800.5], [521.4, 737]],
  [[523, 1030], [522, 965], [521.4, 867], [523, 737]],
  [[472, 1028], [487.5, 1012]],
  [[489, 1016], [562, 1015]],
  [[553.6, 250], [549, 291], [544, 313.5], [537.5, 398], [531, 472], [527, 568], [524.6, 716], [522, 734]],
  [[565, 702.6], [538.6, 774]],
  [[568, 250], [557, 308], [552, 366.5], [543, 472], [537.5, 568], [537.5, 774], [534.6, 1030]],
  [[597, 250], [584, 297.6], [577.5, 337], [575, 440.6], [565.4, 546.5], [565, 885], [562.5, 922], [561.4, 975], [563.5, 1030]],
  [[643, 808.5], [568, 898.5]],
  [[644.6, 808.5], [916, 953]],
  [[997, 250], [1002, 276], [1006, 330]],
  [[1072, 250], [1012, 328]],
];
const CHEV: P[] = [
  [[484, 869], [491, 865], [497, 870]], [[515, 867], [521, 863], [527, 868]], [[516, 966], [522, 962], [528, 966]],
  [[517, 737], [522, 734], [527, 740]], [[558, 700], [564, 704], [571, 700]], [[532, 772], [538, 777], [545, 773]],
  [[558, 884], [564, 888], [570, 884], [575, 887]], [[556, 919], [562, 923], [568, 920]], [[544, 292], [552, 289]], [[483, 1016], [488, 1012], [493, 1016]],
  [[640, 805], [643, 813], [650, 808]],
];
const DOTS: [number, number][] = [[411.8, 284], [519, 653], [569, 652], [760, 548.6], [769, 558.6], [793.6, 567.6], [801.8, 577.7], [903, 537], [745.7, 668.7], [729, 699], [580.7, 891.6], [572.9, 902]];

const TREEICON: Record<string, React.ReactNode> = { f: <FolderIco />, o: <FolderIco open />, d: <DbIco />, s: <ShpIco /> };
const ATTRS = [["FNODE_", "75923,00000000000"], ["TNODE_", "74086,00000000000"], ["LPOLY_", "2,00000000000"], ["RPOLY_", "2,00000000000"], ["LENGTH", "666,43538381400"], ["VIAL_", "110847,00000000000"]];
const GROUPS = ["Agregados", "Cadena", "Campos y valores", "Capas de mapa", "Capas de mapa", "Color", "Concordancia aproximada", "Condicionales", "Conversiones", "Fecha y Hora", "Files and Paths", "General", "Geometría", "Mapas", "Matemáticas", "Matrices", "Operadores", "Rásters", "Reciente (selection)", "Registros y atributos", "Variables"];
const OPS = ["=", "+", "-", "/", "*", "^", "||", "(", ")", "'\\n'"];
const RIGHTROWS = ["", "ARGARITA", "", "", "", "", "n"];
const SEARCH = <Svg s={14} vb="0 0 14 14"><circle cx="5.500" cy="5.500" r="4.500" stroke="#8a8a8a" strokeWidth="1.200" /><path d="M9 9l4.500 4.500" stroke="#8a8a8a" strokeWidth="1.500" /></Svg>;
const X = ({ c = "#f2f2f2" }: { c?: string }) => <Svg s={10} vb="0 0 10 10"><path d="M1.500 1.500l7 7M8.500 1.500l-7 7" stroke={c} strokeWidth="1.300" /></Svg>;

const SIDE: React.ReactNode[] = [
  <Svg s={48} vb="0 0 48 48"><defs><linearGradient id="ff" x1="0" y1="0" x2="1" y2="1"><stop offset="0" stopColor="#ffce3c" /><stop offset=".55" stopColor="#ff6b30" /><stop offset="1" stopColor="#e6226f" /></linearGradient></defs><path d="M32 1c6 5 13 11 14 23 0 13-10 23-22 23S1 37 1 24c0-4 1-8 3-11l2 5c2-4 5-7 10-8-2 4 0 6 3 6 5-3 13-6 13-15z" fill="url(#ff)" /><circle cx="24" cy="26" r="10" fill="#5a3fb8" /><path d="M13 19c4-3 12-3 15 1-5-1-9 0-10 3-1 4 2 8 8 8-6 3-14 0-15-6 0-2 1-4 2-6z" fill="#ff9538" /></Svg>,
  <Svg s={46} vb="0 0 46 46"><rect x="1" y="5" width="44" height="36" rx="4" fill="#3a3a3a" stroke="#666" /><path d="M7 11l6 3.500L7 18M15 19h9" stroke="#f2f2f2" strokeWidth="1.600" /></Svg>,
  <Svg s={50} vb="0 0 50 50"><ellipse cx="25" cy="25" rx="23" ry="23" fill="#1b4f93" /><path d="M8 10c10-9 26-9 34 0 6 8 6 18 2 26-3-14-14-24-36-26z" fill="#2f8fe0" /><path d="M5 30l13-16 26 12-9 14-16-2z" fill="#f4f4f4" stroke="#c9c9d5" /><path d="M18 14l8 10 18 2" stroke="#c9c9d5" /></Svg>,
  <Svg s={46} vb="0 0 46 46"><rect x="1" y="1" width="44" height="44" rx="5" fill="#9b9587" /><path d="M7 13a3 3 0 0 1 3-3h10l3 3h13a3 3 0 0 1 3 3v18a3 3 0 0 1-3 3H10a3 3 0 0 1-3-3z" fill="#fafafa" /></Svg>,
  <Svg s={46} vb="0 0 46 46"><rect x="2" y="2" width="42" height="42" rx="5" fill="#e4e1d9" /><circle cx="23" cy="23" r="17" fill="#222" /><circle cx="23" cy="23" r="11.500" fill="#d9b118" /><circle cx="23" cy="23" r="5" fill="#2a2a2a" /></Svg>,
  <Svg s={46} vb="0 0 46 46"><path d="M4 3h30l9 9v30H4z" fill="#fff" /><path d="M4 3h12L4 14z" fill="#1e7bb0" /><path d="M34 3l9 9h-9z" fill="#185f88" /><rect x="4" y="3" width="39" height="39" rx="3" fill="#2a83b4" opacity=".2" /><path d="M4 39h39v3H4z" fill="#1a6d9e" /><path d="M10 22h13M10 27h13M10 32h26" stroke="#2277aa" strokeWidth="2" /><rect x="25" y="14" width="14" height="11" fill="#eef4f9" stroke="#2277aa" /><path d="M26 24l4-5 3 3 2-2 3 4z" fill="#4f7b9a" /></Svg>,
  <Svg s={46} vb="0 0 46 46"><path d="M15 11c0-10 16-10 16 0" stroke="#f0e0d8" strokeWidth="2" /><rect x="1" y="9" width="44" height="33" rx="4" fill="#ec6a32" /><path d="M23 12l11 25h-22zM4 31h38" stroke="#fff" strokeWidth="2.600" fill="#ec6a32" /></Svg>,
  <Svg s={46} vb="0 0 46 46"><circle cx="23" cy="23" r="22" fill="#2f8fdc" /><path d="M15 17c0-10 16-10 16 0 0 6-8 7-8 14M23 35v4" stroke="#fff" strokeWidth="3" /></Svg>,
  <Svg s={46} vb="0 0 46 46"><path d="M33 1L45 7v32l-12 6-21-19-8 6-3-3 7-6-7-6 3-3 8 6z" fill="#0b78c7" /><path d="M33 13L19 23l14 10z" fill="#2d2030" /><path d="M33 1l12 6v32l-12 6z" fill="#2a9de8" /></Svg>,
  <Svg s={52} vb="0 0 52 52"><path d="M26 6a20 20 0 1 0 11 37l-5-7a12 12 0 1 1 6-10c0 3-1 5-2 7l6 6a20 20 0 0 0-16-33z" fill="#6aa84a" /><path d="M24 23l6-3 18 22-4 4z" fill="#7fb24a" /><path d="M24 23l6-3 3 4-6 3z" fill="#ec6a32" /></Svg>,
];

export default function App() {
  return (
    <Screen>
      <Global />
      <HostTitle>
        <Svg s={21} vb="0 0 21 21"><rect width="21" height="21" fill="#3c2c50" /><path d="M3 17l6-7 2-6h7l-3 5-6 3-2 5z" fill="#f0a030" /><rect x="1" y="1" width="6" height="6" fill="#b7b7c9" /></Svg>
        <span>ubuntu1 [Corriendo] - Oracle VM VirtualBox</span>
        <HostControls>
          <Svg s={12} vb="0 0 12 12"><path d="M0 6h12" stroke="#111" /></Svg>
          <Svg s={12} vb="0 0 12 12"><rect x=".5" y="2.500" width="9" height="9" stroke="#111" /><path d="M3 2.500V.5h8.500V9H9.500" stroke="#111" /></Svg>
          <Svg s={12} vb="0 0 12 12"><path d="M0 0l12 12M12 0L0 12" stroke="#111" /></Svg>
        </HostControls>
      </HostTitle>
      <HostMenu>{["Archivo", "Máquina", "Ver", "Entrada", "Dispositivos", "Ayuda"].map((m) => <span key={m}>{m}</span>)}</HostMenu>
      <Guest>
        <TopBar>
          <span>Actividades</span>
          <TopApp>
            <Svg s={16} vb="0 0 16 16"><circle cx="8" cy="7" r="5.500" stroke="#b5b5b5" strokeWidth="2.500" /><path d="M9 9l5 6" stroke="#b5b5b5" strokeWidth="2.500" /></Svg>
            <span>QGIS Desktop</span>
            <Caret />
          </TopApp>
          <Clock><span>29 de jun&nbsp; 08:03</span><Dot /></Clock>
          <Tray>
            <Svg s={16} vb="0 0 16 16"><path d="M5.500 1h5v4h-5zM.5 11h5v4h-5zM10.500 11h5v4h-5zM8 5v3M3 11V8h10v3" fill="#eee" stroke="#eee" strokeWidth=".8" /></Svg>
            <Svg s={16} vb="0 0 16 16"><path d="M1 5.500h3L9 1v14l-5-4.500H1z" fill="#eee" /><path d="M11 5c1.500 2 1.500 4 0 6M13 3c2 3 2 7 0 10" stroke="#aaa" /></Svg>
            <Svg s={16} vb="0 0 16 16"><rect x="6" y="2" width="8" height="13" fill="none" stroke="#eee" strokeWidth="1.200" /><rect x="8.500" y="1" width="3" height="1.500" fill="#eee" /><path d="M4 3L1 8h2l-1 4 3-5H3z" fill="#eee" /></Svg>
            <Caret />
          </Tray>
        </TopBar>
        <GuestRow>
          <Sidebar>
            {SIDE.map((ic, idx) => (
              <SideItem key={idx} $on={idx === 0 || idx === 9}>
                {idx === 9 && <Pips><Pip /><Pip /><Pip /></Pips>}
                {ic}
              </SideItem>
            ))}
            <AppsGrid>{Array.from({ length: 9 }).map((_, idx) => <AppsDot key={idx} />)}</AppsGrid>
          </Sidebar>
          <Qgis>
            <WinTitle>
              <span>*Para_El_Marte — QGIS</span>
              <WinBtns>
                <Svg s={12} vb="0 0 12 12"><path d="M1 9h10" stroke="#8f8c8a" /></Svg>
                <Svg s={10} vb="0 0 10 10"><rect x=".5" y="2" width="7" height="7" stroke="#8f8c8a" /><path d="M3 2V.5h6.500V7H8" stroke="#8f8c8a" /></Svg>
                <CloseDisc><X /></CloseDisc>
              </WinBtns>
            </WinTitle>
            <MenuBar>{MENU.map((m) => <MnemonicText key={m} t={m} />)}</MenuBar>
            <ToolRow $h={40}><ToolItems items={ROW1} /></ToolRow>
            <ToolRow $h={38}><ToolItems items={ROW2} /></ToolRow>
            <ToolRow $h={39}><ToolItems items={ROW3} /></ToolRow>
            <Content>
              <LeftDock>
                <DockHead><span>Navegador</span><DockBtns><FloatIco /><CloseIco /></DockBtns></DockHead>
                <DockTools>
                  {NAVT.map((n) => <DockTool key={n}><Svg s={18}>{DOCK[n]}</Svg></DockTool>)}
                </DockTools>
                <TreeFrame $h={485} $mt={3}>
                  <TreeMain>
                    <TreeList>
                      {NODES.map(([d, k, ic, t]) => (
                        <TreeRow key={t} $d={d}>
                          <ArrowSlot $k={k} />
                          <NodeIcon>{TREEICON[ic]}</NodeIcon>
                          <span>{t}</span>
                        </TreeRow>
                      ))}
                    </TreeList>
                    <VBar>
                      <BarArrow><TriUp /></BarArrow>
                      <BarTrack $h={59} />
                      <BarTrack $h={235} $fill />
                      <BarTrack />
                      <BarArrow><TriDown /></BarArrow>
                    </VBar>
                  </TreeMain>
                  <HBar>
                    <HArrow><TriLeft /></HArrow>
                    <HThumb />
                    <HTrack />
                    <HArrow><TriRight /></HArrow>
                    <HArrow />
                  </HBar>
                </TreeFrame>
                <Splitter />
                <DockHead><span>Capas</span><DockBtns><FloatIco /><CloseIco /></DockBtns></DockHead>
                <DockTools>
                  <DockTool><Svg s={18}>{DOCK.brush}</Svg></DockTool>
                  <DockTool><Svg s={18}>{DOCK.addgroup}</Svg></DockTool>
                  <DockTool><Svg s={18}>{DOCK.eye}</Svg></DockTool>
                  <DockTool><Svg s={18}>{DOCK.filter}</Svg></DockTool>
                  <DockTool $w={26}><Svg s={18}>{DOCK.expr}</Svg></DockTool>
                  <DockTool $w={13}><Caret $c="#555" /></DockTool>
                  <DockTool $w={24}><Svg s={18}>{DOCK.expand}</Svg></DockTool>
                  <DockTool><Svg s={18}>{DOCK.collapse}</Svg></DockTool>
                  <DockTool><Svg s={18}>{DOCK.remove}</Svg></DockTool>
                </DockTools>
                <TreeFrame $h={176} $mt={3}>
                  <TreeList>
                    {LAYERS.map((l) => (
                      <LayerRow key={l.name} $sel={l.sel}>
                        <Check>{l.chk && <CheckMark />}</Check>
                        <Swatch>{l.sym}</Swatch>
                        <LayerName $off={l.off} $sel={l.sel}>{l.name}</LayerName>
                        {l.sel && <LayerBadge><Svg s={14}><rect x="3" y="7" width="18" height="10" rx="2" stroke="#555" strokeWidth="1.500" /><path d="M7 17v3M12 17v3M17 17v3M7 4v3M12 4v3M17 4v3" stroke="#555" /></Svg></LayerBadge>}
                      </LayerRow>
                    ))}
                  </TreeList>
                </TreeFrame>
              </LeftDock>
              <MapArea>
                <MapSvg viewBox="404 258 1336 767">
                  {ROADS.map((p, idx) => <Road key={idx} p={p} />)}
                  <Road p={[[646.4, 804], [1010, 330]]} w={13} c="#ffff00" />
                  <Road p={[[1002, 276], [1006, 332]]} />
                  {CHEV.map((p, idx) => <polyline key={idx} points={pts(p)} fill="none" stroke="#3a2a22" strokeWidth="1" />)}
                  {DOTS.map(([x, y], idx) => <ellipse key={idx} cx={x} cy={y} rx="4.500" ry="4.500" fill="#7ed013" />)}
                </MapSvg>
              </MapArea>
              <RightDock>
                <RightHead><FloatIco /><CloseIco /></RightHead>
                <TableWrap>
                  <TableMain>
                    <TableHead />
                    {RIGHTROWS.map((t, idx) => <TableCell key={idx} $alt={idx % 2 === 1}>{t}</TableCell>)}
                  </TableMain>
                  <VBar><BarArrow><TriUp /></BarArrow><BarTrack $fill /></VBar>
                </TableWrap>
              </RightDock>
            </Content>
            <StatusBar>
              <Locator>{SEARCH}<span>Escriba para localizar (Ctrl+K)</span></Locator>
              <Message>1 feature(s) selected on layer Hecho buffer.</Message>
              <StatusText $w={70}>Coordenada</StatusText>
              <StatusField $w={109}>341691,6287032</StatusField>
              <StatusGap $w={24}><Svg s={16} vb="0 0 16 16"><path d="M3 2l10 12M13 2L3 14" stroke="#555" strokeWidth="1.500" /><circle cx="8" cy="8" r="4" stroke="#555" /></Svg></StatusGap>
              <StatusGap $w={11} />
              <StatusText $w={37}>Escala</StatusText>
              <StatusField $w={96}>1:4189</StatusField>
              <StatusGap $w={33}><Svg s={14} vb="0 0 14 14"><rect x="2" y="6" width="10" height="8" rx="1" fill="#777" /><path d="M4 6V4a3 3 0 0 1 6 0v2" stroke="#777" strokeWidth="1.400" /></Svg></StatusGap>
              <StatusText $w={73}>Amplificador</StatusText>
              <StatusField $w={98}>100%</StatusField>
              <StatusGap $w={10} />
              <StatusText $w={58}>Rotación</StatusText>
              <StatusField $w={92}>0,0 °</StatusField>
              <StatusGap $w={26}><Check style={{ marginRight: 0 }}><CheckMark /></Check></StatusGap>
              <StatusText $w={83}>Representar</StatusText>
              <StatusGap $w={17}><Svg s={14} vb="0 0 14 14"><circle cx="7" cy="7" r="6" fill="#999" /><path d="M1 7h12M7 1v12" stroke="#efefef" /></Svg></StatusGap>
              <StatusText $w={89}>EPSG:32719</StatusText>
              <StatusGap $w={16}><Svg s={15} vb="0 0 15 15"><path d="M1 7.500a6.500 6 0 1 1 3 5L2 14l.5-3A6 6 0 0 1 1 7.500z" fill="#666" /></Svg></StatusGap>
            </StatusBar>
          </Qgis>
        </GuestRow>
      </Guest>
      <HostStatus>
        <Svg s={18} vb="0 0 18 18"><rect x="1" y="1" width="16" height="16" rx="3" fill="#3f8fc9" /><circle cx="9" cy="9" r="4" stroke="#fff" /></Svg>
        <Svg s={18} vb="0 0 18 18"><circle cx="9" cy="9" r="8" fill="#ddd" stroke="#aaa" /><circle cx="9" cy="9" r="2" fill="#fff" stroke="#aaa" /></Svg>
        <Svg s={18} vb="0 0 18 18"><path d="M2 2l8 5-8 5z" fill="#2f7ac0" /><rect x="10" y="8" width="6" height="8" fill="#9aa" /></Svg>
        <Svg s={18} vb="0 0 18 18"><rect x="5" y="1" width="12" height="9" fill="#4b8ad0" /><rect x="1" y="6" width="12" height="9" fill="#3a70b5" stroke="#dde" /></Svg>
        <Svg s={18} vb="0 0 18 18"><path d="M3 15L12 3l3 2-8 11z" fill="#9cc4ea" stroke="#3a70b5" /></Svg>
        <Svg s={18} vb="0 0 18 18"><rect x="2" y="3" width="14" height="13" fill="#ddd" stroke="#bbb" /></Svg>
        <Svg s={18} vb="0 0 18 18"><path d="M2 2h14v14H2z" fill="#2f7ac0" /><path d="M2 16L16 2v14z" fill="#5aa0e0" /></Svg>
        <Svg s={18} vb="0 0 18 18"><rect x="7" y="1" width="10" height="11" fill="#3a70b5" /><rect x="1" y="6" width="10" height="11" fill="#5a90cf" stroke="#fff" /></Svg>
        <Svg s={18} vb="0 0 18 18"><rect x="3" y="2" width="12" height="14" rx="2" fill="#4b74c6" /><path d="M6 5v5a3 3 0 0 0 6 0V5" stroke="#fff" /></Svg>
        <Svg s={18} vb="0 0 18 18"><circle cx="9" cy="9" r="8" fill="#6fb1e8" /><path d="M6 3l8 6-8 6z" fill="#4bb04a" /></Svg>
        <Svg s={18} vb="0 0 18 18"><rect x="2" y="1" width="14" height="16" rx="2" fill="#3a8ac5" /><path d="M9 4v7M6 8l3 4 3-4" stroke="#61d14a" strokeWidth="2" /></Svg>
        <span>&nbsp;CTRL DERECHA</span>
      </HostStatus>
      <BottomLine />

      <Floating $x={1258} $y={205} $w={499} $h={243} $z={5}>
        <FloatTitle $h={35} $fs={12}>
          <span>RedVialComunasSantiago - Atributos del objeto espacial</span>
          <FloatClose $r={7}><CloseDisc $c="#565351"><X /></CloseDisc></FloatClose>
        </FloatTitle>
        <AttrBody>
          <AttrGrid>
            {ATTRS.map(([k, v]) => (
              <AttrRow key={k}><AttrLabel>{k}</AttrLabel><AttrValue>{v}</AttrValue></AttrRow>
            ))}
          </AttrGrid>
          <AttrBar><AttrBarUp><TriUp /></AttrBarUp><AttrThumb /><AttrTrack /></AttrBar>
        </AttrBody>
      </Floating>

      <Floating $x={940} $y={448} $w={980} $h={584} $z={6}>
        <FloatTitle $h={37} $fs={14.8}>
          <span>Hecho buffer — Select by Expression</span>
          <FloatClose $r={8}><CloseDisc $c="#e95420" $s={19}><X /></CloseDisc></FloatClose>
        </FloatTitle>
        <TabsRow>
          <Tab $on>Expresión</Tab>
          <Tab>Editor de funciones</Tab>
        </TabsRow>
        <DlgMain>
          <LeftCol>
            <SmallBtnRow>
              <SmallBtn $off><Ico n="newdoc" s={17} /></SmallBtn>
              <SmallBtn><Ico n="save" s={17} /></SmallBtn>
              <SmallBtn $off><Ico n="editall" s={17} /></SmallBtn>
              <SmallBtn $off><Ico n="trash" s={17} /></SmallBtn>
              <SmallBtn>
                <Svg s={18}><path d="M12 2v12M7 10l5 6 5-6" stroke="#3e6f9e" strokeWidth="2.500" /><rect x="2" y="18" width="20" height="4" fill="#4f7fb2" /></Svg>
              </SmallBtn>
              <SmallBtn>
                <Svg s={18}><path d="M12 16V4M7 9l5-6 5 6" stroke="#d9c92a" strokeWidth="2.500" /><rect x="2" y="18" width="20" height="4" fill="#4f7fb2" /></Svg>
              </SmallBtn>
            </SmallBtnRow>
            <Editor>
              <EdLine $cur />
              <EdLine><Tk $c="#4f80b0">TNODE_</Tk><Tk $c="#9a4fa8"> = </Tk><Tk $c="#839a3c">'74086'</Tk></EdLine>
            </Editor>
            <OpRow>{OPS.map((o, idx) => <OpBtn key={o} $on={idx === 0}>{o}</OpBtn>)}</OpRow>
            <FeatRow>
              <FeatLabel>Objeto espacial</FeatLabel>
              <Combo><span>AGUAS ANDINAS</span><ComboArrow><Caret $c="#666" /></ComboArrow></Combo>
              <NavBtn><Svg s={16} vb="0 0 16 16"><path d="M11 2L4 8l7 6z" fill="#c8c8c8" stroke="#b5b5b5" /></Svg></NavBtn>
              <NavBtn><Svg s={16} vb="0 0 16 16"><path d="M5 2l7 6-7 6z" fill="#5a86b2" stroke="#3c5f86" /></Svg></NavBtn>
            </FeatRow>
            <Preview>Previsualizar:  0</Preview>
          </LeftCol>
          <MidCol>
            <SearchRow>
              <SearchBox>{SEARCH}<span>Buscar…</span></SearchBox>
              <HelpBtn>Mostrar ayuda</HelpBtn>
            </SearchRow>
            <GroupList>
              {GROUPS.map((t, idx) => <GroupRow key={idx}><GroupArrow /><GroupText>{t}</GroupText></GroupRow>)}
            </GroupList>
          </MidCol>
          <HelpPane />
        </DlgMain>
        <DlgFoot>
          <FootBtn $w={79}>
            <Svg s={16} vb="0 0 16 16"><circle cx="8" cy="8" r="7.500" fill="#2e7fd6" /><path d="M6 6c0-3 4.500-3 4.500 0 0 2-2.500 2-2.500 4M8 11.500v1.500" stroke="#fff" strokeWidth="1.300" /></Svg>
            <span>Ayuda</span>
          </FootBtn>
          <FootBtn $w={239} $ml={550} $ls={.2}>
            <Svg s={15}><rect x="8" y="8" width="14" height="14" rx="2" fill="#f0cf42" stroke="#b39a27" /><path d="M11 3c-4-1-7 0-6 3 0 2 2 2 4 2-3 0-5 1-4 4 0 2 4 2 6 1" stroke="#4a6d8f" strokeWidth="2" /></Svg>
            <span>Seleccionar objetos espaciales</span>
          </FootBtn>
          <FootBtn $w={13} $ml={1}><Caret $c="#555" /></FootBtn>
          <FootBtn $w={80} $ml={11}><span><u>C</u>errar</span></FootBtn>
        </DlgFoot>
      </Floating>
    </Screen>
  );
}
